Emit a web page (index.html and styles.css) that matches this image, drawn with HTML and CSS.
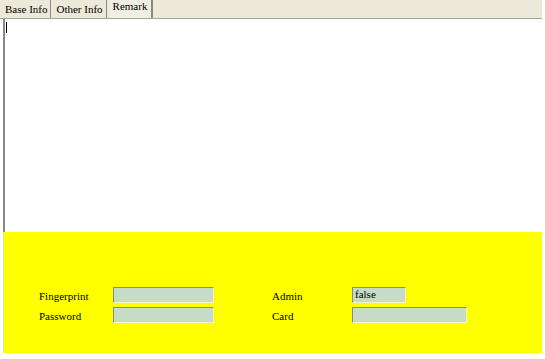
FILE: index.html
```html
<html lang="en">
<head>
    <meta charset="UTF-8">
    <title>Remark</title>
    <link rel="stylesheet" href="styles.css">
</head>
<body>
    <div class="tabs">
        <span class="tab">Base Info</span>
        <span class="tab">Other Info</span>
        <span class="tab active">Remark</span>
    </div>
    <div class="page">
        <div class="remark"><span class="caret"></span></div>
        <div class="panel">
            <div class="grid">
                <div class="label">Fingerprint</div>
                <div class="field w100"></div>
                <div class="label">Admin</div>
                <div class="field w54">false</div>

                <div class="label">Password</div>
                <div class="field w100"></div>
                <div class="label">Card</div>
                <div class="field w114"></div>
            </div>
        </div>
    </div>
</body>
</html>
```

FILE: styles.css
```css
*{
    margin: 0; padding: 0;
    box-sizing: border-box;
}
body{
    font-family: "Liberation Serif", "Times New Roman", "DejaVu Serif", serif;
    font-size: 11px;
    color: #000;
    background: #fff;
    width: 545px;
    height: 359px;
    overflow: hidden;
}
.tabs{
    height: 19px;
    background: #ece9d8;
    border-bottom: 1px solid #a7a69b;
    display: flex;
    align-items: flex-end;
    padding-left: 3px;
    margin-right: 3px;
}
.tab{
    font-family: "Liberation Serif", "Times New Roman", "DejaVu Serif", serif;
    height: 18px;
    line-height: 18px;
    padding: 0 3px 0 2px;
    border-right: 1px solid #8a8a80;
    margin-right: 3px;
}
.tab.active{
    height: 19px;
    line-height: 15px;
    background: #f1efe3;
    padding: 0 4px 0 3px;
    border-right: 2px solid #8a8a80;
}
.page{
    padding-left: 3px;
    width: 542px;
}
.remark{
    height: 213px;
    background: #fff;
    border-left: 2px solid #8a8a84;
    padding: 3px 0 0 1px;
}
.caret{
    display: block;
    width: 1px;
    height: 11px;
    background: #000;
}
.panel{
    height: 121px;
    background: #ffff00;
    border-left: 1px solid #e0e0a0;
    padding: 55px 0 0 35px;
}
.grid{
    display: grid;
    grid-template-columns: 74px 159px 80px auto;
    grid-auto-rows: 16px;
    row-gap: 4px;
    align-items: center;
}
.label{
    line-height: 16px;
    padding-top: 2px;
}
.field{
    height: 16px;
    background: #c6dcc6;
    border: 1px solid;
    border-color: #8c8c7c #f4f4d0 #f4f4d0 #8c8c7c;
    line-height: 13px;
    padding-left: 2px;
}
.w100{ width: 101px; }
.w54{ width: 54px; }
.w114{ width: 115px; }
```
